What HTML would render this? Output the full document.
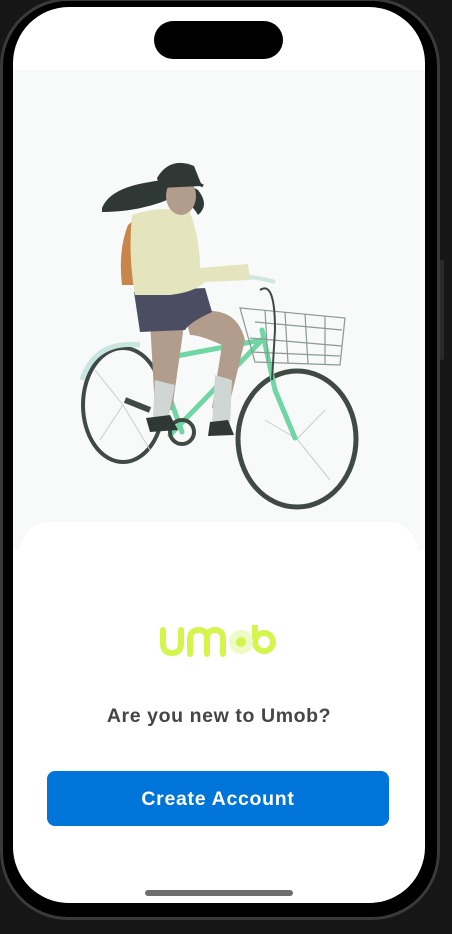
<!DOCTYPE html>
<html><head><meta charset="utf-8"><style>
html,body{margin:0;padding:0;background:#161616;width:452px;height:934px;overflow:hidden;font-family:"Liberation Sans",sans-serif}
.frame{position:absolute;left:0;top:-2px;width:440px;height:922px;border-radius:68px;background:#000;box-shadow:inset 0 0 0 3px #3a3a3a}
.btn-side{position:absolute;left:440px;top:260px;width:4px;height:100px;background:#2a2a2a;border-radius:2px}
.screen{position:absolute;left:13px;top:7px;width:412px;height:896px;border-radius:56px;background:#fff;overflow:hidden}
.illu{position:absolute;left:0;top:63px;width:412px;height:480px;background:#f8f9f9}
.card{position:absolute;left:7px;top:515px;width:398px;height:400px;background:#fff;border-radius:30px 30px 0 0}
.island{position:absolute;left:141px;top:14px;width:129px;height:38px;border-radius:19px;background:#000}
.q{position:absolute;left:0;width:412px;top:698px;text-align:center;font-weight:bold;font-size:19.5px;color:#454545;letter-spacing:0.6px}
.btn{position:absolute;left:34px;top:764px;width:342px;height:55px;border-radius:8px;background:#0075d9;color:#fff;font-weight:bold;font-size:19.5px;text-align:center;line-height:57px;letter-spacing:0.7px}
.home{position:absolute;left:132px;top:883px;width:148px;height:6px;border-radius:3px;background:#6e6e6e}
</style></head><body>
<div class="frame"></div><div class="btn-side"></div>
<div class="screen">
<div class="illu"></div>
<svg width="412" height="560" style="position:absolute;left:-13px;top:-7px" viewBox="0 0 412 560">
<ellipse cx="123" cy="405" rx="40" ry="57" fill="none" stroke="#3f4a45" stroke-width="4"/>
<ellipse cx="297" cy="439" rx="59" ry="68" fill="none" stroke="#3f4a45" stroke-width="5"/>
<g stroke="#c9cfcc" stroke-width="1"><line x1="123" y1="405" x2="95" y2="370"/><line x1="123" y1="405" x2="150" y2="450"/><line x1="123" y1="405" x2="100" y2="440"/><line x1="297" y1="439" x2="330" y2="480"/><line x1="297" y1="439" x2="265" y2="420"/><line x1="297" y1="439" x2="325" y2="410"/></g>
<path d="M82 380 Q95 340 140 345" fill="none" stroke="#c6e6df" stroke-width="5"/>
<g stroke="#6fd6a4" stroke-width="5" fill="none" stroke-linecap="round">
<line x1="170" y1="435" x2="262" y2="340"/>
<line x1="155" y1="360" x2="262" y2="340"/>
<path d="M262 330 L275 390 L295 438"/>
<line x1="160" y1="370" x2="182" y2="432"/>
</g>
<circle cx="182" cy="432" r="12" fill="none" stroke="#3f4a45" stroke-width="4"/>
<path d="M125 400 L150 410" stroke="#3f4a45" stroke-width="6"/>
<g stroke="#8a9a95" stroke-width="1.2" fill="none">
<path d="M240 308 L345 318 L340 365 L255 362 Z"/>
<line x1="255" y1="322" x2="342" y2="330"/><line x1="250" y1="338" x2="342" y2="346"/><line x1="252" y1="352" x2="340" y2="356"/>
<line x1="265" y1="310" x2="268" y2="362"/><line x1="285" y1="312" x2="288" y2="363"/><line x1="305" y1="314" x2="308" y2="364"/><line x1="325" y1="316" x2="325" y2="364"/>
</g>
<path d="M260 290 Q275 280 275 330 L272 380" stroke="#3f4a45" stroke-width="2" fill="none"/>
<path d="M210 280 Q240 272 275 282" stroke="#cfe6e2" stroke-width="4" fill="none"/>
<path d="M150 320 L185 318 L172 410 L155 410 Z" fill="#b29c8c"/>
<path d="M185 315 Q235 300 245 340 L228 410 L212 408 L222 345 Q200 335 190 335 Z" fill="#b29c8c"/>
<path d="M155 380 L175 385 L168 420 L153 418 Z" fill="#cfd6d3"/>
<path d="M215 375 L232 380 L230 425 L212 425 Z" fill="#cfd6d3"/>
<path d="M146 418 L170 415 L178 430 L150 432 Z" fill="#2f3834"/>
<path d="M210 422 L228 420 L234 435 L208 436 Z" fill="#2f3834"/>
<path d="M134 292 L205 288 L212 312 Q190 322 185 330 L140 332 Z" fill="#4b4d63"/>
<path d="M128 225 L140 215 L138 285 L122 285 Q118 250 128 225 Z" fill="#c8864a"/>
<path d="M132 215 Q160 205 190 212 Q200 240 200 268 L248 264 L250 280 L205 282 Q195 292 170 295 L135 295 Q128 255 132 215 Z" fill="#e4e5bd"/>
<path d="M102 208 Q110 188 150 182 Q175 176 198 190 Q210 205 198 215 Q190 200 172 198 Q140 212 102 212 Z" fill="#2f3834"/>
<ellipse cx="181" cy="196" rx="15" ry="19" fill="#b29c8c"/>
<path d="M157 178 Q170 156 194 166 L202 186 L160 188 Z" fill="#2f3834"/>
<path d="M188 178 L203 186" stroke="#2f3834" stroke-width="3"/>
</svg>
<div class="card"></div>
<div class="island"></div>
<svg style="position:absolute;left:146px;top:618px" width="120" height="34" viewBox="0 0 120 34">
<g fill="none" stroke="#d3f54c" stroke-width="6" stroke-linecap="round">
<path d="M4 5 V18 Q4 28 13 28 Q22 28 22 18 V5"/>
<path d="M31 29 V14 Q31 5 40 5 Q48 5 48 14 V29 M48 14 Q48 5 56 5 Q64 5 64 14 V29"/>
<path d="M96 0 V17"/><circle cx="105" cy="17" r="9"/>
</g>
<circle cx="82" cy="17" r="12" fill="#eefbc6"/><circle cx="82" cy="17" r="5" fill="#d3f54c"/>
</svg>
<div class="q">Are you new to Umob?</div>
<div class="btn">Create Account</div>
<div class="home"></div>
</div>
</body></html>
